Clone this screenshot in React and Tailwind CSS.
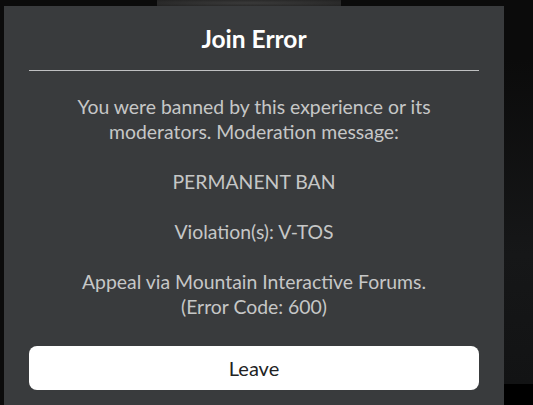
import React from "react";

const font = { fontFamily: "Lato, 'Open Sans', sans-serif" };

export default function App() {
  return (
    <div
      className="relative w-[533px] h-[405px] overflow-hidden bg-[#0b0b0b]"
      style={font}
    >
      {/* background bits behind the dialog */}
      <div className="absolute left-[157px] top-0 w-[184px] h-[6px] bg-[radial-gradient(ellipse_at_center,#3a3a3a,#232323)]" />
      <div className="absolute left-[504px] top-[60px] w-[29px] h-[324px] bg-[linear-gradient(180deg,#0b0b0b,#161718_60%,#121314)]" />
      <div className="absolute left-[504px] top-[384px] w-[29px] h-[21px] bg-black" />

      <div className="relative ml-[4px] mt-[6px] w-[500px] h-[420px] bg-[#393b3d] px-[25px]">
        <div className="h-[64px] pt-[2px] flex items-center justify-center">
          <h1 className="text-[24.5px] font-bold text-white leading-none">
            Join Error
          </h1>
        </div>
        <div className="h-px bg-[#bfc0c1]" />

        <div className="mt-[23px] text-center text-[19.4px] leading-[25px] text-[#c6c7c7]">
          <p>
            You were banned by this experience or its
            <br />
            moderators. Moderation message:
          </p>
          <p className="mt-[25px]">PERMANENT BAN</p>
          <p className="mt-[25px]">Violation(s): V-TOS</p>
          <p className="mt-[25px]">
            Appeal via Mountain Interactive Forums.
            <br />
            (Error Code: 600)
          </p>
        </div>

        <button className="mt-[27px] w-full h-[44px] rounded-[8px] bg-white text-[20px] text-[#222324] flex items-center justify-center">
          Leave
        </button>
      </div>
    </div>
  );
}
